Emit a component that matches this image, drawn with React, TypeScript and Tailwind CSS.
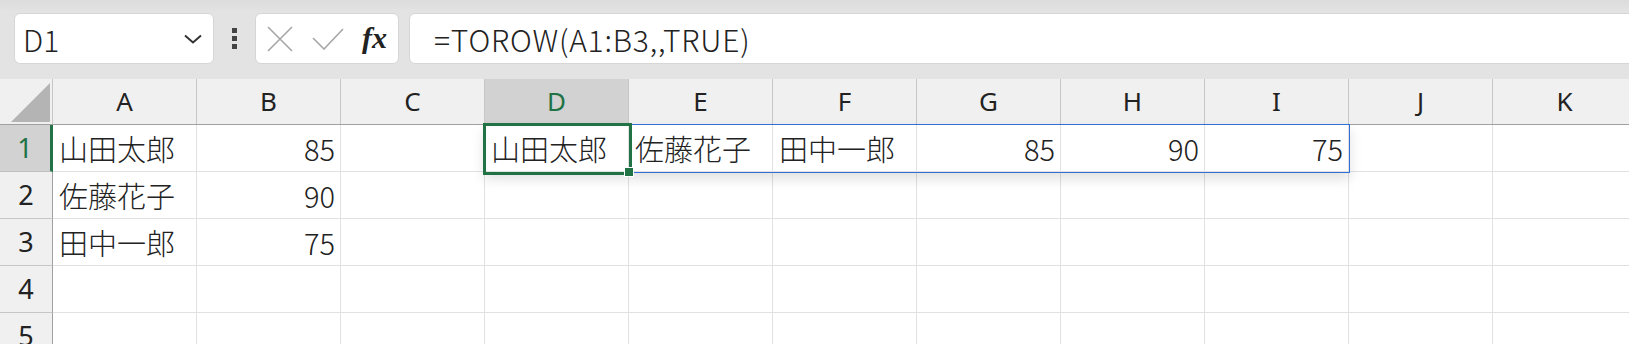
import React from 'react'

const cols = ['A', 'B', 'C', 'D', 'E', 'F', 'G', 'H', 'I', 'J', 'K']

type Cell = { v: string; num?: boolean }

const rows: Record<number, Record<string, Cell>> = {
  1: {
    A: { v: '山田太郎' },
    B: { v: '85', num: true },
    D: { v: '山田太郎' },
    E: { v: '佐藤花子' },
    F: { v: '田中一郎' },
    G: { v: '85', num: true },
    H: { v: '90', num: true },
    I: { v: '75', num: true },
  },
  2: { A: { v: '佐藤花子' }, B: { v: '90', num: true } },
  3: { A: { v: '田中一郎' }, B: { v: '75', num: true } },
  4: {},
  5: {},
}

const cellFont = { fontFamily: '"Noto Sans CJK JP", "Noto Sans", sans-serif' }

export default function App() {
  return (
    <div className="relative w-[1629px] h-[344px] overflow-hidden bg-[#e3e3e3] text-[#222]" style={cellFont}>
      {/* toolbar */}
      <div className="flex items-start h-[79px] pt-[13px] pl-[14px] bg-gradient-to-b from-[#dcdcdc] to-[#e3e3e3] from-0% to-[15%]">
        <div className="flex items-center justify-between w-[200px] h-[51px] rounded-[6px] border border-[#d6d6d6] bg-white pl-[8px] pr-[11px]">
          <span className="text-[30px] leading-none font-light">D1</span>
          <svg width="18" height="10" viewBox="0 0 18 10" fill="none" stroke="#333" strokeWidth="2">
            <path d="M1 1.5 L9 8.5 L17 1.5" />
          </svg>
        </div>
        <div className="flex flex-col gap-[3px] ml-[18px] mt-[15px]">
          <div className="w-[5px] h-[5px] bg-[#444]" />
          <div className="w-[5px] h-[5px] bg-[#444]" />
          <div className="w-[5px] h-[5px] bg-[#444]" />
        </div>
        <div className="flex items-center w-[144px] h-[51px] ml-[18px] rounded-[6px] border border-[#d6d6d6] bg-white pl-[11px]">
          <svg width="26" height="26" viewBox="0 0 26 26" fill="none" stroke="#a6a6a6" strokeWidth="1.6">
            <path d="M1 1 L25 25 M25 1 L1 25" />
          </svg>
          <svg className="ml-[19px]" width="32" height="22" viewBox="0 0 32 22" fill="none" stroke="#a6a6a6" strokeWidth="1.6">
            <path d="M1 10 L12 21 L31 1" />
          </svg>
          <span
            className="ml-[18px] text-[30px] italic font-bold leading-none text-[#222] -mt-[2px]"
            style={{ fontFamily: '"Liberation Serif", "DejaVu Serif", serif' }}
          >
            fx
          </span>
        </div>
        <div className="flex items-center flex-1 h-[51px] ml-[10px] -mr-[10px] rounded-l-[6px] border border-[#d6d6d6] bg-white pl-[24px]">
          <span className="text-[30px] leading-none tracking-[0.8px] font-light">=TOROW(A1:B3,,TRUE)</span>
        </div>
      </div>

      {/* column headers */}
      <div className="flex h-[46px] bg-[#f0f0f0] border-b border-[#a0a0a0]">
        <div className="relative w-[53px] shrink-0 border-r border-[#c6c6c6]">
          <svg className="absolute left-[11px] top-[4px]" width="39" height="39" viewBox="0 0 39 39">
            <path d="M39 0 L39 39 L0 39 Z" fill="#b4b4b4" />
          </svg>
        </div>
        {cols.map((c) => (
          <div
            key={c}
            className={
              'w-[144px] shrink-0 flex items-center justify-center border-r border-[#c6c6c6] text-[26px] ' +
              (c === 'D' ? 'bg-[#d2d2d2] text-[#217346]' : '')
            }
            style={{ fontFamily: '"Noto Sans", "Open Sans", sans-serif' }}
          >
            {c}
          </div>
        ))}
      </div>

      {/* rows */}
      <div className="bg-white">
        {[1, 2, 3, 4, 5].map((r) => (
          <div key={r} className="flex h-[47px]">
            <div
              className={
                'w-[53px] shrink-0 flex items-center justify-center text-[27px] border-b ' +
                (r === 1
                  ? 'bg-[#d2d2d2] text-[#217346] border-r-[3px] border-r-[#217346] border-b-[#c0c0c0]'
                  : 'bg-[#f0f0f0] border-r border-r-[#a0a0a0] border-b-[#c6c6c6]')
              }
              style={{ fontFamily: '"Noto Sans", "Open Sans", sans-serif' }}
            >
              {r}
            </div>
            {cols.map((c) => {
              const cell = rows[r][c]
              return (
                <div
                  key={c}
                  className={
                    'w-[144px] shrink-0 flex items-center border-r border-b border-[#e1e1e1] text-[29px] leading-none font-light ' +
                    (cell?.num ? 'justify-end pr-[5px]' : 'pl-[6px]')
                  }
                >
                  {cell?.v}
                </div>
              )
            })}
          </div>
        ))}
      </div>

      {/* spill range border */}
      <div className="absolute left-[484px] top-[124px] w-[866px] h-[49px] border border-[#2f6fd6] shadow-[0_6px_12px_rgba(0,0,0,0.12)] pointer-events-none" />
      {/* active cell */}
      <div className="absolute left-[483px] top-[123px] w-[149px] h-[52px] border-[3px] border-[#217346] pointer-events-none" />
      <div className="absolute left-[625px] top-[168px] w-[8px] h-[8px] bg-[#217346] outline outline-1 outline-white" />
    </div>
  )
}
